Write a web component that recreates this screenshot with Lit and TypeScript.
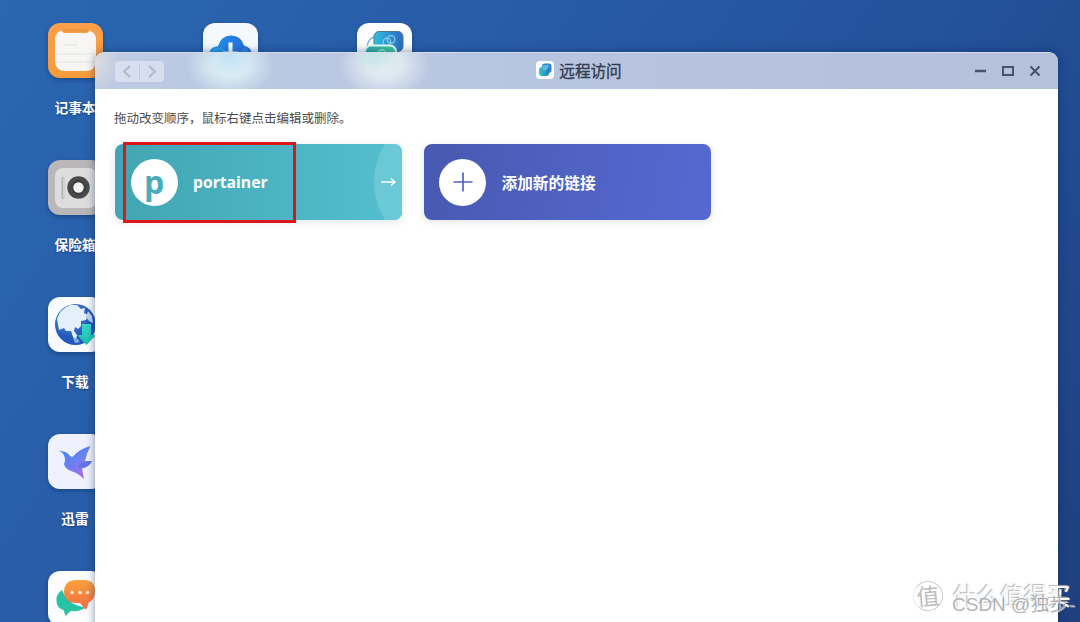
import { LitElement, html, css } from "lit";
import { customElement } from "lit/decorators.js";

const notes = html`<svg viewBox="0 0 55 55">
  <defs><linearGradient id="n" x2="0" y2="1"><stop stop-color="#fba049"/><stop offset="1" stop-color="#f89b3c"/></linearGradient></defs>
  <rect width="55" height="55" rx="12" fill="url(#n)"/>
  <rect x="7" y="7" width="41" height="41" rx="9" fill="#f7f6f5"/>
  <path d="M13 5h29v1q-1 4-4 4H17q-3 0-4-4z" fill="#fba049"/>
  <rect x="15" y="6" width="25" height="3" rx="1.5" fill="#ee943c"/>
  <path d="M15 22h15M9 31h37M9 39h37" stroke="#e2e2e1" stroke-width="1.2"/>
</svg>`;

const cloud = html`<svg viewBox="0 0 55 55">
  <defs><linearGradient id="c" x1="0" x2="1"><stop stop-color="#2b9fee"/><stop offset=".4" stop-color="#2284e6"/><stop offset="1" stop-color="#2b65d9"/></linearGradient></defs>
  <rect width="55" height="55" rx="12" fill="#f5f8ff"/>
  <path d="M16 43C8 43 6 38 6 32q0-8 9-9Q18 12.500 28 12.500q10 0 13 10 8 2 8 10 0 10.500-10 10.500z" fill="url(#c)"/>
  <path d="M8 28q7-6 14-1l6 8 14-10q5 2 6 9-1 9-9 9H16Q6 42 6 32z" fill="#28b8ee" opacity=".45"/>
  <path d="M25.500 19.500h4v9h6L27.500 37l-8-8.500h6z" fill="#fff"/>
</svg>`;

const remote = html`<svg viewBox="0 0 55 55">
  <defs><linearGradient id="r"><stop stop-color="#33bddc"/><stop offset="1" stop-color="#286cc4"/></linearGradient>
  <linearGradient id="g"><stop stop-color="#35a9a1"/><stop offset="1" stop-color="#40d0a1"/></linearGradient></defs>
  <rect width="55" height="55" rx="12" fill="#fbfcfd"/>
  <path d="M10 24q1-8 7-10" fill="none" stroke="#79b8df" stroke-width="1.500"/>
  <rect x="17" y="8.500" width="29" height="20" rx="5" fill="url(#r)" stroke="#53758d"/>
  <g fill="none" stroke="#8bcaf0" stroke-width="1.300"><circle cx="30" cy="19" r="3.800"/><circle cx="34" cy="16.500" r="3.800"/></g>
  <rect x="8" y="22.500" width="31" height="24" rx="6" fill="url(#g)" stroke="#e1fff8" stroke-width="2"/>
  <circle cx="25" cy="31" r="4" fill="none" stroke="#9cebd8" stroke-width="1.500"/>
</svg>`;

const safe = html`<svg viewBox="0 0 55 55">
  <rect width="55" height="55" rx="12" fill="#b9b7b8"/>
  <rect x="7" y="8" width="42" height="40" rx="8" fill="#dedddd"/>
  <rect x="13.500" y="17" width="3.500" height="22" rx="1.700" fill="#b2b1b1"/><path d="M16 18v20" stroke="#e9e9e9" stroke-width="1.200"/>
  <circle cx="30.500" cy="27.500" r="11.200" fill="#4a4a4d"/><circle cx="30.500" cy="27.500" r="7.500" fill="#3f3f43"/>
  <circle cx="30.500" cy="27.500" r="5.200" fill="#f2f2f2"/>
</svg>`;

const globe = html`<svg viewBox="0 0 55 55">
  <defs><radialGradient id="o" cx=".35" cy=".3"><stop stop-color="#589ae1"/><stop offset="1" stop-color="#2359b8"/></radialGradient>
  <linearGradient id="a" x2="0" y2="1"><stop stop-color="#3bd6cb"/><stop offset="1" stop-color="#16bda9"/></linearGradient></defs>
  <rect width="55" height="55" rx="12" fill="#f8fbff"/>
  <circle cx="27.500" cy="27.500" r="20.500" fill="url(#o)"/>
  <path d="M9 22q3-10 13-14l7 0 4 4 4-1-1 5 4 2-2 5-5 1 0 5-3 3-3-2-1 4 3 4-1 5-3-3-2-6-5 0-2-3-5 2-1-5z" fill="#e3effb"/>
  <path d="M40 14l4 5 1 7-4-2-3-4z" fill="#b9d3f0"/>
  <path d="M25 41l5 1 2 3-5 1z" fill="#7fabe2"/>
  <path d="M34 27h9v11h5l-9.500 10L29 38h5z" fill="url(#a)"/>
</svg>`;

const bird = html`<svg viewBox="0 0 55 55">
  <defs><linearGradient id="b" x1="0" y1="0" x2=".8" y2="1"><stop stop-color="#4d83ee"/><stop offset=".5" stop-color="#6681f0"/><stop offset="1" stop-color="#b566ef"/></linearGradient></defs>
  <rect width="55" height="55" rx="12" fill="#eff2fd"/>
  <path d="M10.500 16.500l5 1q4 .5 6.500 4.500 1.500 1 3 .5Q31 15 42.500 12q-4 7-5.500 15h7q-3 6-10 7.500l2 10.500Q30 39 23 37q-6-2-7-7 2-4 0-8.500-1-3-5.500-5z" fill="url(#b)"/>
  <path d="M33 29.500q4-2.500 11-2.500-3 6-10 7l-4-1z" fill="#6274e6"/>
</svg>`;

const chat = html`<svg viewBox="0 0 55 55">
  <defs><linearGradient id="h" x2="0" y2="1"><stop stop-color="#f9a23e"/><stop offset="1" stop-color="#f46a43"/></linearGradient></defs>
  <rect width="55" height="55" rx="12" fill="#fdfdfe"/>
  <path d="M14 19Q8 23 8.500 30q0 7 7 9l2 6 5-5q10 1 16-4-17 0-24.500-17z" fill="#28c3a4"/>
  <path d="M28 9h8q11 0 11 11 0 9-6 11l-3 8-6-7h-5Q16 31 16 20 17 9 28 9z" fill="url(#h)"/>
  <g fill="#ffe7cb"><circle cx="24" cy="21.500" r="1.800"/><circle cx="32" cy="21.500" r="1.800"/><circle cx="39.500" cy="21.500" r="1.800"/></g>
</svg>`;

@customElement("app-root")
export class AppRoot extends LitElement {
  static styles = css`
    :host { display: block; position: relative; width: 1080px; height: 622px; overflow: hidden; box-sizing: border-box;
      background: linear-gradient(125deg, #2a66b1 0%, #285ca7 35%, #23519a 65%, #1f3f7f 100%);
      font-family: "Open Sans", "Noto Sans CJK SC", sans-serif; }
    .desktop { display: grid; grid-template-columns: repeat(3, 55px); column-gap: 99.500px; grid-auto-flow: column; grid-template-rows: repeat(5, 137px); padding: 23.400px 0 0 48px; }
    .app { display: flex; flex-direction: column; align-items: center; }
    .tile { width: 55px; height: 55px; border-radius: 12px; box-shadow: 0 2px 4px #0b254f66; flex: none; }
    .tile svg { display: block; width: 55px; height: 55px; }
    .label { margin-top: 19.600px; margin-left: -1px; font-size: 13.700px; line-height: 20px; font-weight: 700; color: #fff; white-space: nowrap; text-shadow: 0 1px 2px #09285a88; }
    .window { position: absolute; left: 95px; top: 52px; width: 963px; height: 590px; border-radius: 9px 9px 0 0; box-shadow: 0 0 8px #0c224d80; }
    .bar { box-sizing: border-box; height: 37px; border-radius: 9px 9px 0 0; border-top: 1px solid #d5dded;
      background:
        radial-gradient(ellipse 26px 18px at 135px 3px, #bfe2f6 0%, #bfe2f600 100%),
        radial-gradient(ellipse 44px 32px at 135px 12px, #dceef5 0%, #dceef5e0 40%, #dceef500 100%),
        radial-gradient(ellipse 26px 16px at 280px 2px, #c3e5e5 0%, #c3e5e500 100%),
        radial-gradient(ellipse 46px 34px at 289px 12px, #e2ecf2 0%, #e2ecf2e0 40%, #e2ecf200 100%),
        radial-gradient(ellipse 26px 34px at 0 8px, #dfdddd 0%, #dfdddd00 100%),
        linear-gradient(90deg, #bccae4, #b8c5e0 45%, #b5c0db);
      display: grid; grid-template-columns: 1fr auto 1fr; align-items: center; padding: 0 15px 0 20px; }
    .nav { width: 49px; height: 21px; border-radius: 4px; background: #ffffff66; }
    .nav svg { display: block; width: 49px; height: 21px; }
    .title { display: flex; align-items: center; gap: 5px; font-size: 15.600px; line-height: 20px; color: #303c52; -webkit-text-stroke: .35px #303c52; }
    .mark { width: 18px; height: 18px; margin-top: -2px; }
    .controls { justify-self: end; width: 70px; height: 14px; }
    .body { background: #fff; height: 553px; padding: 19px 19px; box-sizing: border-box; }
    .hint { font-size: 12.500px; line-height: 22px; color: #4c4c4c; white-space: nowrap; }
    .cards { display: flex; gap: 21.500px; margin: 14px 0 0 1px; }
    .card { box-sizing: border-box; width: 287px; height: 76px; border-radius: 8px; display: flex; align-items: center; gap: 15.500px; padding-left: 15.500px; color: #fff; font-weight: 700; font-size: 15.700px; box-shadow: 0 2px 8px #37507626; }
    .teal { background: linear-gradient(90deg, #42a5b2, #54bfcf); overflow: hidden; }
    .indigo { background: linear-gradient(100deg, #4859b1, #5669d2); }
    .badge { display: flex; align-items: center; justify-content: center; width: 47px; height: 47px; border-radius: 50%; background: #fff; flex: none; }
    .letter { color: #48adba; font-size: 32px; line-height: 42px; }
    .badge svg { width: 20px; height: 20px; }
    .go { margin-left: auto; width: 29px; height: 76px; }
    .mark-box { position: absolute; left: 123px; top: 142px; width: 173px; height: 81px; box-sizing: border-box; border: 3px solid #dc171c; }
    .stamp { position: absolute; left: 913px; top: 581px; display: flex; align-items: center; gap: 10px; white-space: nowrap; color: #fff; font-size: 23.600px; line-height: 30px; text-shadow: -1px -1px 1px #b4b4b4, 0 0 1px #ccc; }
    .seal { width: 30px; height: 30px; box-sizing: border-box; border: 1.500px solid #ccc; border-left-color: #e8e8e8; border-radius: 50%; display: flex; justify-content: center; align-items: center; color: #bdbdbd; text-shadow: none; font-size: 23px; transform: rotate(-5deg); }
    .credit { position: absolute; left: 952px; top: 593px; white-space: nowrap; font: 19px/24px "Liberation Sans", "Noto Sans CJK SC", sans-serif; color: #a4a6aadd; text-shadow: 1px 1px 0 #ffffffaa; }
  `;

  private app(icon: unknown, label = "") {
    return html`<div class="app"><div class="tile">${icon}</div><div class="label">${label}</div></div>`;
  }

  render() {
    return html`
      <div class="desktop">
        ${this.app(notes, "记事本")}${this.app(safe, "保险箱")}${this.app(globe, "下载")}${this.app(bird, "迅雷")}${this.app(chat)}
        ${this.app(cloud)}<i></i><i></i><i></i><i></i>${this.app(remote)}
      </div>
      <section class="window">
        <header class="bar">
          <div class="nav"><svg viewBox="0 0 49 21" fill="none" stroke="#b0b8c9" stroke-width="2"><path d="M15 5l-6 5.500 6 5.500M34 5l6 5.500-6 5.500"/><path d="M24.500 3v15" stroke="#c0cada" stroke-width="1"/></svg></div>
          <div class="title">
            <svg class="mark" viewBox="0 0 18 18"><defs><linearGradient id="m"><stop stop-color="#30cbb9"/><stop offset="1" stop-color="#287ac9"/></linearGradient></defs><rect width="18" height="18" rx="4" fill="#fbfdff"/><rect x="6" y="2.500" width="9.500" height="9.500" rx="3" fill="#2e83ca"/><rect x="3" y="6" width="10" height="9" rx="3" fill="url(#m)"/><path d="M5 6q3-3 8-2-1 5-5 6z" fill="#5bb9e4"/></svg>
            <span>远程访问</span>
          </div>
          <svg class="controls" viewBox="0 0 70 14" fill="none" stroke="#46516c"><path d="M2 7h11" stroke-width="2.500"/><rect x="30" y="3" width="10" height="8" stroke-width="2"/><path d="M57.500 2.500l9 9m0-9l-9 9" stroke-width="2"/></svg>
        </header>
        <main class="body">
          <div class="hint">拖动改变顺序，鼠标右键点击编辑或删除。</div>
          <div class="cards">
            <div class="card teal"><div class="badge"><span class="letter">p</span></div><span>portainer</span>
              <svg class="go" viewBox="0 0 29 76"><path d="M12 0h17v76H12Q1 58 1 38T12 0z" fill="#6bc9d7"/><path d="M8 38h14M18 34.500l4 3.500-4 3.500" fill="none" stroke="#fff" stroke-width="1.300"/></svg>
            </div>
            <div class="card indigo"><div class="badge"><svg viewBox="0 0 20 20" stroke="#4f62cf" stroke-width="1.700"><path d="M10 .5v19M.5 10h19"/></svg></div><span>添加新的链接</span></div>
          </div>
        </main>
      </section>
      <div class="mark-box"></div>
      <div class="stamp"><span class="seal">值</span><span>什么值得买</span></div>
      <div class="credit">CSDN @独步-</div>
    `;
  }
}
